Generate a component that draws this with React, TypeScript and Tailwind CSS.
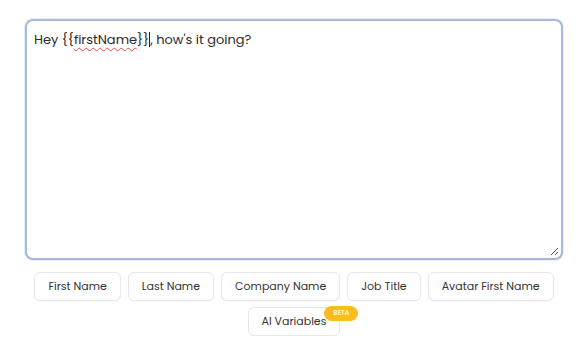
import React from 'react';

const VARIABLES = ['First Name', 'Last Name', 'Company Name', 'Job Title', 'Avatar First Name'];

export default function App() {
  return (
    <div className="w-[588px] h-[352px] bg-white px-[25px] pt-[19px] font-['Poppins','Lato','Noto_Sans',sans-serif]">
      {/* Message box */}
      <div className="relative h-[241px] rounded-lg border-2 border-[#a9b9dd] bg-white shadow-[0_0_0_1px_rgba(169,185,221,0.25)] px-[7px] py-[9px]">
        <p className="text-[13px] leading-[20px] text-[#2a2a2a]">
          Hey {'{{'}
          <span className="underline decoration-wavy decoration-[#e05252] decoration-1 underline-offset-[3px]">firstName</span>
          {'}}'}
          <span className="inline-block w-px h-[15px] bg-[#222] align-middle -mt-[2px]" />, how's it going?
        </p>
        <svg className="absolute right-[2px] bottom-[2px]" width="9" height="9" viewBox="0 0 9 9">
          <path d="M8 1L1 8M8 5L5 8" stroke="#555" strokeWidth="1" />
        </svg>
      </div>

      {/* Variable buttons */}
      <div className="flex flex-wrap justify-center gap-x-[7px] gap-y-[6px] mt-[12px]">
        {VARIABLES.map((v) => (
          <button
            key={v}
            className="h-[29px] px-[13px] rounded-md border border-[#e6e6ec] bg-white text-[11px] text-[#333] shadow-[0_1px_2px_rgba(0,0,0,0.03)]"
          >
            {v}
          </button>
        ))}
        <button className="relative h-[29px] px-[13px] rounded-md border border-[#e6e6ec] bg-white text-[11px] text-[#333]">
          AI Variables
          <span className="absolute -top-[2px] -right-[19px] h-[15px] w-[34px] rounded-full bg-[#fbbd1c] text-[6px] font-bold leading-[15px] text-[#fff3c4] tracking-wide text-center">
            BETA
          </span>
        </button>
      </div>
    </div>
  );
}
